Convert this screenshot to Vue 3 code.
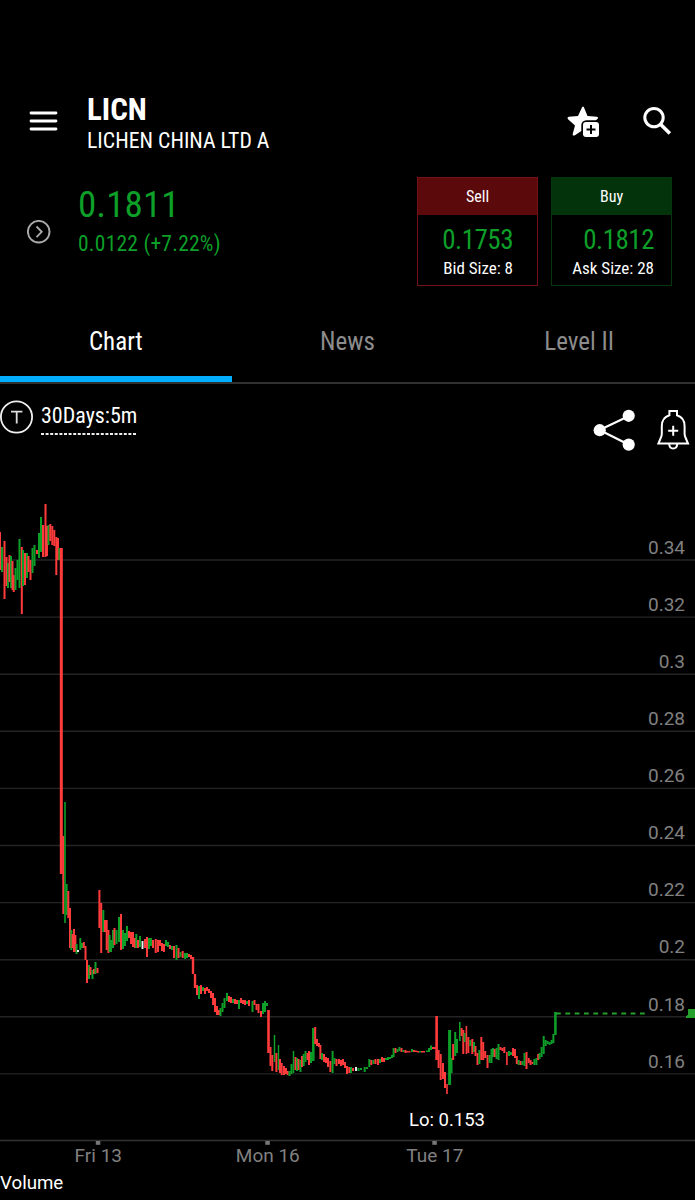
<script setup>
import { ref } from "vue";

const tabs = ["Chart", "News", "Level II"];
const activeTab = ref("Chart");

const quotes = [
	{ side: "Sell", type: "sell", price: "0.1753", size: "Bid Size: 8" },
	{ side: "Buy", type: "buy", price: "0.1812", size: "Ask Size: 28" },
];

const prices = [0.34, 0.32, 0.3, 0.28, 0.26, 0.24, 0.22, 0.2, 0.18, 0.16];
const gridY = (index) => 560 + index * 57.1;

const days = [
	{ label: "Fri 13", x: 98 },
	{ label: "Mon 16", x: 267.5 },
	{ label: "Tue 17", x: 434.5 },
];

const colors = { r: "#ff3b3b", g: "#0d9f28", w: "#e8e8e8" };

// color, x, top, bottom, width (optional)
const series = `
r 0 532 570,g 2 547 572,r 4.5 541 599,r 6.5 557 586,g 8 563 588,r 9.5 555 582,g 11 556 588,r 12.5 561 590,r 13.7 575 592,g 15.5 568 590,
g 17.5 560 580,g 19.5 539 588,r 21.8 547 614,g 23 550 586,r 25 553 585,g 27 553 578,r 28.5 556 572,r 30.5 560 580,g 32.5 548 573,g 34.5 545 566,
r 37 550 554,g 39 533 558,g 41 517 552,r 43 525 557,r 45.5 504 557,r 47 526 556,g 48.5 525 545,r 50.3 524 541,r 52.3 526 545,r 54.3 530 546,
r 56.3 537 575,r 58 538 560,g 59.3 548 560,r 61.3 548 874 3,r 63.3 836 914,g 65 802 923 1.6,g 66.6 884 915,r 68.3 891 918,r 70 908 948,g 71.3 930 950,
r 72.6 934 948,r 74 929 952,r 75.4 935 952,g 76.6 944 954,w 78 950 952,g 80.3 938 950,g 82 943 948,r 83.8 942 948,r 85.5 946 960,r 87 960 983,
g 89 965 979,r 90.5 967 975,g 92.5 970 979,r 94 969 974,g 95.5 962 974,r 97.5 968 973,r 99.4 890 928,r 101.2 903 953,g 103.3 910 932,r 105 920 932,
r 106.7 920 950,r 108.4 930 953,g 109.6 935 952,g 111 940 952,g 113 930 948,r 114.5 928 945,g 116.5 930 944,g 119 917 942,r 121 914 950,g 123 930 949,
g 125 933 946,g 127 926 941,r 129 931 938,r 131 932 944,r 133 932 947,r 135 938 948,g 136.3 934 948,r 138 940 948,g 140 936 947,w 142.5 941 949,
r 145 939 948,r 147 937 957,g 149 938 949,g 151 938 946,r 153 940 948,r 155.7 939 953,r 158 940 952,r 160 940 946,r 162 943 951,r 164 944 952,
g 166 940 946,g 168 942 947,r 170 945 949,g 172 946 950,r 174 946 958,g 176.5 945 960,r 178.5 948 958,g 180.5 952 957,r 182.7 951 958,g 185 953 959,
g 187 953 958,r 189 954 957,r 191 955 959,r 193 957 974 2.4,r 195 974 988 2.4,r 197 985 995,g 199 986 999,r 201 985 994,g 203 987 991,r 205 988 994,
r 207 987 991,r 209 989 993,r 211 991 998,r 213 993 1005,r 215 998 1012,r 217 1006 1015,r 219 1010 1015,g 220.5 1008 1016,g 222.5 1003 1012,g 224.5 998 1008,
g 227 993 1001,r 229 996 1002,r 231 997 1003,g 233 999 1003,r 235 999 1004,r 237 1000 1004,g 239 1000 1009,r 241 998 1003,r 243 1000 1004,r 245 1000 1005,
g 247 1001 1004,r 249 1000 1006,g 252.5 1001 1012,r 254.5 1000 1005,r 256.5 1004 1010,r 258.5 1004 1013,r 261 1011 1017,g 263 1003 1014,g 265 1001 1012,g 267 1003 1006,
r 268.5 1010 1053 2.6,r 270.5 1047 1066,r 272.3 1055 1071,g 274.5 1035 1062 1.5,r 276.4 1053 1072,g 278.5 1045 1070 1.4,r 280 1059 1073,r 281.7 1063 1075,r 284 1066 1075,r 286 1068 1074,
r 287.7 1071 1075,g 289.5 1071 1076,g 291.5 1064 1074,g 293.5 1051 1073 1.5,r 295.5 1057 1070,g 297 1058 1071,r 298.6 1059 1070,g 300.5 1060 1072,r 302 1056 1067,g 303.7 1054 1066,
g 305.5 1051 1062,r 307.5 1053 1060,r 309 1051 1065,g 311 1052 1063,g 313.3 1028 1061 2.5,r 315.2 1027 1044,r 317 1039 1046,r 319 1043 1047,r 320.4 1045 1059,g 322 1053 1060,
r 324 1054 1062,r 326 1057 1063,r 328 1058 1067,r 330.4 1061 1072,g 332.6 1051 1073,g 334.5 1058 1064,r 336.5 1059 1066,r 339 1059 1064,r 341 1060 1066,r 343 1059 1065,
r 345 1062 1068,r 347 1066 1074,r 349.3 1067 1073,g 351 1067 1073,r 353 1068 1071,w 356 1067 1071,g 358.5 1068 1071,g 361 1068 1070,g 364.7 1067 1072,g 367 1067 1069,
g 369.3 1059 1067,r 371.3 1060 1065,g 373.4 1060 1064,r 375.5 1059 1064,r 378 1059 1065,g 380 1059 1063,r 382 1057 1062,r 384 1058 1062,g 386 1058 1060,g 388 1057 1060,
g 390 1057 1059,g 392 1055 1058,g 393.6 1048 1057,r 395.5 1048 1053,g 397.5 1049 1052,g 399.5 1047 1051,r 401.5 1048 1052,g 403.5 1050 1052,r 405.5 1050 1053,r 407.5 1051 1052.5,
r 409.5 1051 1052.5,g 412 1049 1052,r 414 1050 1052,r 416 1050.5 1052,r 418 1051 1052.5,g 420 1051 1052.5,r 422 1051 1052.5,r 424 1051 1052.5,g 427 1050.5 1052,g 429 1048 1052,
g 431 1045.5 1050,r 433 1047 1049,r 434.8 1047 1049,r 436.6 1016 1060 2.6,r 438.6 1050 1068,r 440.7 1054 1080,r 443 1063 1079,r 445 1072 1088,r 447 1084 1094 1.6,g 449.6 1030 1085 3,
g 451.5 1058 1073,r 453.2 1044 1060,g 455.2 1032 1056,g 457 1039 1053,g 459.8 1022 1041 1.6,r 461.6 1028 1036,r 463.3 1030 1054,g 464.6 1033 1042,r 466.4 1026 1054 1.6,r 468.3 1037 1053,
g 470.3 1040 1046,r 472.3 1039 1054,g 474 1042 1052,r 475.5 1046 1056,r 477.5 1053 1065,g 479.4 1050 1064,r 481.3 1037 1060,r 483.2 1042 1060,r 485.2 1051 1058,r 487.5 1055 1068,
g 489.6 1055 1063,g 491.5 1049 1063,g 493 1048 1057,r 494.7 1049 1057,g 496.6 1048 1059,g 498.5 1044 1060,r 500.5 1047 1050,r 502.4 1048 1051,r 504.3 1047 1053,r 506.9 1052 1065 1.6,
g 509 1051 1056,g 511 1052 1055,r 513 1048 1056,r 515 1049 1058,r 516.8 1056 1064,g 518.7 1060 1065,r 520.6 1061 1065,g 522.5 1061 1065,g 524.5 1053 1066,r 526.5 1052 1069,
r 528.7 1058 1063,r 530.6 1060 1065,r 532.5 1062 1064,g 534.4 1059 1065,g 536.4 1058 1065,r 538.2 1054 1060,g 539.6 1053 1059,g 541.6 1047 1057,g 543.7 1036 1054,g 545.7 1040 1046,
g 547.6 1041 1044,g 549.6 1042 1045,g 551.6 1040 1044,g 553.4 1034 1043,g 555.4 1012 1035 2.6`;

const candles = series.split(",").map((item) => {
	const [color, x, top, bottom, width = 2] = item.trim().split(" ");
	return { color: colors[color], x: +x, top: +top, bottom: +bottom, width: +width };
});
</script>

<template>
	<div class="screen">
		<header class="header">
			<svg class="menu" width="30" height="22" viewBox="0 0 30 22">
				<path d="M3 3h25M3 11h25M3 19h25" stroke="#fff" stroke-width="2.8" stroke-linecap="round" />
			</svg>
			<div class="title">
				<h1>LICN</h1>
				<p>LICHEN CHINA LTD A</p>
			</div>
			<svg class="star" width="34" height="34" viewBox="0 0 34 34">
				<path
					d="M15.2 2Q16 .8 16.8 2L20.5 11L30 11.7Q31.8 12.2 30.6 13.8L29 15.2H19.5Q14.5 15.6 14.3 20V26L8 30.3Q5.5 31.3 5.7 29.1L8 20.5L1 14.2Q-.2 12.2 1.8 11.7L11 11Z"
					fill="#fff"
				/>
				<rect x="16" y="17" width="16" height="15" rx="3" fill="#fff" />
				<path d="M24 20v9M19.5 24.5h9" stroke="#000" stroke-width="2" />
			</svg>
			<svg class="search" width="30" height="30" viewBox="0 0 30 30">
				<circle cx="12" cy="11.6" r="9.2" fill="none" stroke="#fff" stroke-width="3" />
				<path d="M18.5 18.3l9.4 9.2" stroke="#fff" stroke-width="3.6" />
			</svg>
		</header>

		<section class="summary">
			<svg class="expand" width="24" height="24" viewBox="0 0 24 24">
				<circle cx="11.7" cy="11.7" r="10.8" fill="none" stroke="#aaa" stroke-width="1.9" />
				<path d="M9.5 6.5l5.2 5.3-5.2 5.3" fill="none" stroke="#aaa" stroke-width="1.9" />
			</svg>
			<div class="last">
				<strong>0.1811</strong>
				<span>0.0122 (+7.22%)</span>
			</div>
			<div class="quotes">
				<button v-for="quote in quotes" :key="quote.side" class="quote" :class="quote.type">
					<span class="side">{{ quote.side }}</span>
					<span class="values">
						<span class="price">{{ quote.price }}</span>
						<span class="size">{{ quote.size }}</span>
					</span>
				</button>
			</div>
		</section>

		<nav class="tabs">
			<button
				v-for="tab in tabs"
				:key="tab"
				:class="{ active: activeTab === tab }"
				@click="activeTab = tab"
			>
				{{ tab }}
			</button>
		</nav>

		<div class="toolbar">
			<svg class="type" width="34" height="34" viewBox="0 0 34 34">
				<circle cx="16.5" cy="17" r="15.6" fill="none" stroke="#eee" stroke-width="1.8" />
				<path d="M11 11.7h11.4M16.7 11.7v11.8" stroke="#ddd" stroke-width="1.8" />
			</svg>
			<div class="range">
				<span>30Days:5m</span>
				<svg width="95" height="2" viewBox="0 0 95 2">
					<path d="M0 1h95" stroke="#eee" stroke-width="1.8" stroke-dasharray="3 1.6" />
				</svg>
			</div>
			<svg class="share" width="42" height="42" viewBox="0 0 42 42">
				<path d="M36 7L6.5 21l29.5 14.7" fill="none" stroke="#fff" stroke-width="2.2" />
				<circle cx="6.7" cy="21.2" r="6.1" fill="#fff" />
				<circle cx="35.7" cy="6.8" r="6.1" fill="#fff" />
				<circle cx="35.7" cy="35.6" r="6.1" fill="#fff" />
			</svg>
			<svg class="bell" width="34" height="42" viewBox="0 0 34 42">
				<path
					d="M13.4 2h7.6v4.3c5 1.5 7.6 5.8 7.6 11v7.5q0 2.2 1 4l2.4 5.7H2.4l2.4-5.7q1-1.8 1-4v-7.5c0-5.2 2.6-9.5 7.6-11zM13.2 35.5q.5 4 4 4t4-4M17.2 16.8v10M12.2 21.8h10"
					fill="none"
					stroke="#fff"
					stroke-width="2"
				/>
			</svg>
		</div>

		<svg class="chart" width="695" height="720" viewBox="0 460 695 720">
			<g class="grid">
				<g v-for="(price, index) in prices" :key="price">
					<line x1="0" x2="695" :y1="gridY(index)" :y2="gridY(index)" />
					<text x="685" :y="gridY(index) - 6.3" text-anchor="end">{{ price }}</text>
				</g>
			</g>
			<rect
				v-for="(candle, index) in candles"
				:key="index"
				:x="candle.x - candle.width / 2"
				:y="candle.top"
				:width="candle.width"
				:height="candle.bottom - candle.top"
				:fill="candle.color"
			/>
			<path d="M556 1013.5h89" stroke="#26a02c" stroke-width="2" stroke-dasharray="4.8 4.53" />
			<path d="M688 1009h7v9h-9v-2l2-1z" fill="#26a02c" />
			<text class="low" x="447" y="1126" text-anchor="middle">Lo: 0.153</text>
			<line class="axis" x1="0" x2="695" y1="1140.5" y2="1140.5" />
			<g v-for="day in days" :key="day.label" class="day">
				<rect :x="day.x - 2.2" y="1141" width="4.5" height="3.8" />
				<text :x="day.x + 0.3" y="1162" text-anchor="middle">{{ day.label }}</text>
			</g>
		</svg>
		<div class="volume">Volume</div>
	</div>
</template>

<style>
body {
	background-color: #000;
}
</style>

<style scoped>
.screen {
	display: flex;
	flex-direction: column;
	width: 695px;
	height: 1200px;
	overflow: hidden;
	box-sizing: border-box;
	padding-top: 80px;
	color: #fff;
	background-color: #000;
	font-family: "Roboto Condensed", Roboto, sans-serif;
	font-stretch: 75%;
}

button {
	padding: 0;
	border: 0;
	color: inherit;
	background: none;
	font: inherit;
}

.header {
	display: flex;
	align-items: flex-start;
	height: 92px;
	padding: 0 23px 0 28px;
}

.menu {
	margin-top: 30px;
}

.title {
	flex: 1;
	margin: 12px 0 0 29px;
}

.title h1 {
	margin: 0;
	font-size: 31px;
	line-height: 35px;
	font-weight: 700;
}

.title p {
	margin: 0;
	font-size: 21.8px;
	line-height: 27px;
}

.star {
	margin: 25px 41px 0 0;
}

.search {
	margin-top: 26px;
}

.summary {
	display: flex;
	align-items: flex-start;
	height: 136px;
	padding: 5px 23px 0 27px;
	box-sizing: border-box;
}

.expand {
	margin-top: 43px;
}

.last {
	display: flex;
	flex-direction: column;
	flex: 1;
	margin: 7px 0 0 27px;
	color: #0d9f28;
}

.last strong {
	font-size: 37px;
	line-height: 42px;
	font-weight: 400;
	letter-spacing: 0.1px;
}

.last span {
	font-size: 21.5px;
	line-height: 36px;
	letter-spacing: 0.25px;
}

.quotes {
	display: flex;
	gap: 13px;
}

.quote {
	display: flex;
	flex-direction: column;
	width: 121px;
	height: 109px;
	box-sizing: border-box;
	border: 1px solid #741117;
}

.quote .side {
	width: 100%;
	height: 37px;
	line-height: 38px;
	font-size: 16px;
	background-color: #5c090b;
}

.quote.buy {
	border-color: #05370f;
}

.quote.buy .side {
	background-color: #02330b;
}

.values {
	display: flex;
	flex-direction: column;
	align-items: flex-end;
	align-self: flex-end;
	margin-right: 17px;
}

.quote.sell .values {
	margin-right: 24px;
}

.price {
	margin-top: 9px;
	color: #0d9f28;
	font-size: 27px;
	line-height: 32px;
	letter-spacing: -0.5px;
}

.size {
	font-size: 17px;
	line-height: 25px;
}

.tabs {
	display: flex;
	height: 76px;
	box-sizing: border-box;
	border-bottom: 2px solid #303030;
}

.tabs button {
	flex: 1;
	height: 74px;
	box-sizing: border-box;
	padding-bottom: 1px;
	border-bottom: 6px solid transparent;
	color: #8c8c8c;
	font-size: 25px;
	line-height: 54px;
}

.tabs .active {
	color: #fff;
	border-color: #00aeff;
}

.toolbar {
	display: flex;
	align-items: flex-start;
	height: 76px;
	padding-right: 5px;
}

.type {
	margin-top: 16px;
}

.range {
	display: flex;
	flex-direction: column;
	gap: 4px;
	margin: 18px auto 0 7px;
	font-size: 22px;
	line-height: 27px;
}

.share {
	margin: 25px 21px 0 0;
}

.bell {
	margin-top: 25px;
}

.chart,
.volume {
	flex: none;
	font-family: Roboto, sans-serif;
	font-stretch: 100%;
}

.grid line,
.axis {
	stroke: #242424;
	stroke-width: 1.4;
}

.axis {
	stroke: #333;
}

.grid text,
.day text {
	fill: #808080;
	font-size: 19px;
}

.day rect {
	fill: #777;
}

.low {
	fill: #fff;
	font-size: 18.5px;
}

.volume {
	height: 20px;
	margin-top: -7px;
	font-size: 18.7px;
	line-height: 20px;
}
</style>
